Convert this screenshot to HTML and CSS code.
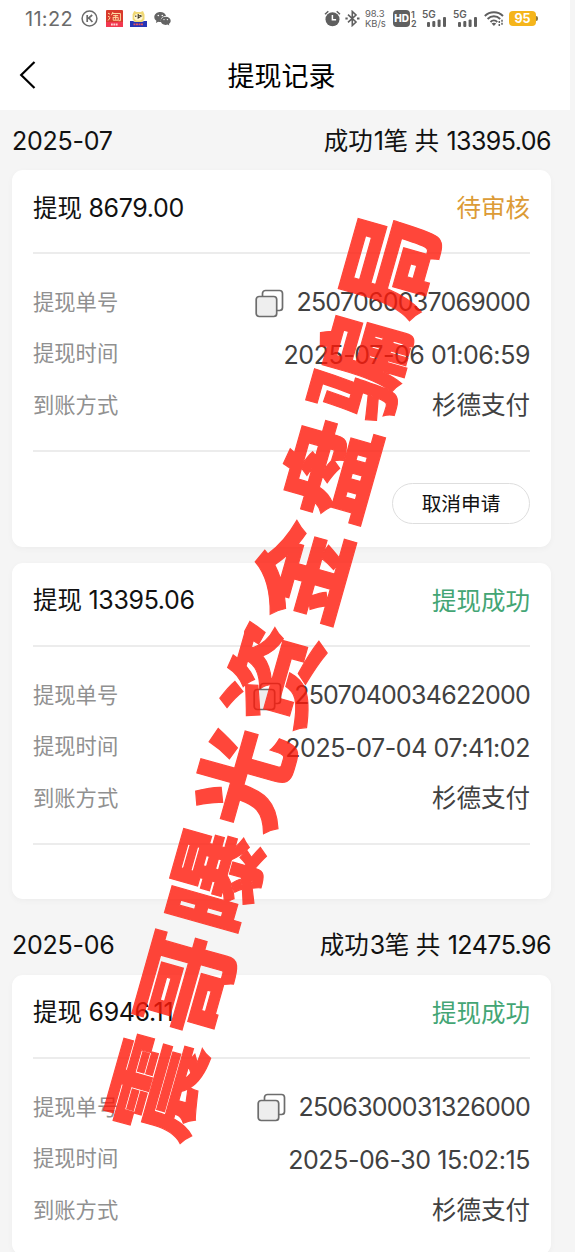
FILE: index.html
```html
<!DOCTYPE html>
<html lang="zh-CN">
<head>
<meta charset="utf-8">
<title>提现记录</title>
<link rel="stylesheet" href="styles.css">
</head>
<body>
<div class="page">
  <header class="top">
    <div class="status">
      <span class="clock">11:22</span>
      <svg class="ic-k" width="17" height="17" viewBox="0 0 17 17" fill="none" stroke="#6b6b6b"><circle cx="8.5" cy="8.5" r="7.4" stroke-width="1.5"/><path d="M6.2 5v7M11.2 5 7 8.7M8 8l3.4 4" stroke-width="1.7"/></svg>
      <svg class="ic-app" width="17" height="17" viewBox="0 0 17 17"><rect width="17" height="17" rx="1" fill="#d93a2c"/><path d="M2 3.2l2 1M2 6.3l2 1M2 10.5l2.2-2.8M7 2 5.4 5.2M6 3.5h8.4v7.2h-2M7.2 5.6h5M9.7 4.8v5M6.6 7.4h6M7.2 8v2.2h5V8" stroke="#ffd9a0" stroke-width="1" fill="none"/><rect y="12" width="17" height="5" fill="#f23850"/><path d="M5 14.5h7" stroke="#ffd3d3" stroke-width="1.8" stroke-dasharray="1.8 .6"/></svg>
      <svg class="ic-app" width="17" height="17" viewBox="0 0 17 17"><path d="M2.6 4.3 4.2 1l2.5 1h3.8L13 1l1.5 3.5v5L12 12H5L2.6 9.5z" fill="#f0d873"/><ellipse cx="8.4" cy="7.2" rx="4.2" ry="3.4" fill="#fff7d4"/><path d="M5.8 5.5v1.6M8.2 4v4l3-2-3-1.5" stroke="#3b3322" stroke-width="1.1" fill="none"/><path d="M0 11h3l2 1h7l2-1h3v6H0z" fill="#2535b6"/><path d="M3.5 14.3h10" stroke="#e05162" stroke-width="1.8" stroke-dasharray="2 .5"/></svg>
      <svg class="ic-chat" width="17" height="17" viewBox="0 0 17 17"><path d="M6.3 2C2.900 2 .3 4.200.3 7c0 1.600.8 2.900 2.100 3.800L1.900 13l2.300-1.200c.8.3 2 .3 2.900.1C6 8.500 8.400 6 12 6 11.400 3.500 9.200 2 6.300 2z" fill="#646464"/><path d="M11.700 6.700c-2.900 0-5 1.800-5 4.100s2.100 4.100 5 4.100c.6 0 1.200-.1 1.800-.3l1.800 1-.4-1.700c1.200-.8 1.800-1.900 1.800-3.100 0-2.300-2.100-4.100-5-4.100z" fill="#646464"/><g fill="#fff"><circle cx="4.300" cy="5.500" r=".8"/><circle cx="8.300" cy="5.500" r=".8"/><circle cx="10" cy="9.600" r=".7"/><circle cx="13.400" cy="9.600" r=".7"/></g></svg>
      <span class="spacer"></span>
      <svg width="17" height="17" viewBox="0 0 17 17"><circle cx="8.500" cy="9.200" r="7" fill="#5f5f5f"/><path d="M1 4.200 4.300 1.300M16 4.200l-3.300-2.900" stroke="#5f5f5f" stroke-width="1.500"/><path d="M8.400 5v4.700h3.700" fill="none" stroke="#fff" stroke-width="1.500"/></svg>
      <svg class="ic-bt" width="15" height="17" viewBox="0 0 15 17" fill="none" stroke="#5f5f5f" stroke-width="1.600"><path d="M3 4.700 11 12l-3.700 3.500v-14L11 5 3 12.300"/><path d="M.4 8.500h2.300M12 8.500h2.500" stroke-width="2"/></svg>
      <span class="speed"><span>98.3</span><span>KB/s</span></span>
      <span class="hd">HD</span>
      <span class="sims"><span>1</span><span>2</span></span>
      <span class="cell"><span class="gen">5G</span><svg width="20" height="10" viewBox="0 0 20 10" fill="#5f5f5f"><rect x="0" y="5" width="3" height="5" rx="1"/><rect x="5.300" y="4" width="3" height="6" rx="1"/><rect x="10.600" y="2.500" width="3" height="7.500" rx="1"/><rect x="16" y="0" width="3" height="10" rx="1"/></svg></span>
      <span class="cell"><span class="gen">5G</span><svg width="20" height="10" viewBox="0 0 20 10" fill="#5f5f5f"><rect x="0" y="5" width="3" height="5" rx="1"/><rect x="5.300" y="4" width="3" height="6" rx="1"/><rect x="10.600" y="2.500" width="3" height="7.500" rx="1"/><rect x="16" y="0" width="3" height="10" rx="1"/></svg></span>
      <svg class="ic-wifi" width="20" height="17" viewBox="0 0 20 17" fill="none" stroke="#5f5f5f" stroke-width="1.900"><path d="M.8 6c5-5 13.200-5 18.200 0M3.600 9c3.600-3.600 9-3.600 12.600 0M6.500 12c2-2 4.800-2 6.800 0"/><path d="m7.600 13.500 2.300 2.400 2.300-2.400c-1.300-1-3.300-1-4.600 0z" fill="#5f5f5f" stroke="none"/><path d="M15.300 11v5M18 9.800v5" stroke-width="1.500" stroke-dasharray="2 1"/></svg>
      <span class="battery">95</span>
    </div>
    <nav class="nav">
      <svg class="back" width="18" height="28" viewBox="0 0 18 28" fill="none" stroke="#000" stroke-width="2.200"><path d="M15.500 1 2.200 14l13.300 13"/></svg>
      <h1>提现记录</h1>
    </nav>
  </header>

  <main class="list">
    <div class="month"><span class="n ym">2025-07</span><span class="sum">成功<b class="n">1</b>笔 共 <b class="n">13395.06</b></span></div>
    <section class="card">
      <div class="head"><span>提现 <b class="n">8679.00</b></span><span class="pending">待审核</span></div>
      <div class="rows">
        <div class="row"><label>提现单号</label><span class="val"><svg class="copy" width="29" height="29" viewBox="0 0 29 29" fill="none" stroke="#6d6d6d" stroke-width="1.700"><rect x="7.500" y="1.500" width="20" height="20" rx="3"/><rect x="1.200" y="7.500" width="20.500" height="20" rx="3" fill="#eee"/></svg><b class="n">2507060037069000</b></span></div>
        <div class="row"><label>提现时间</label><span class="val n">2025-07-06 01:06:59</span></div>
        <div class="row"><label>到账方式</label><span class="val">杉德支付</span></div>
      </div>
      <div class="foot"><button class="cancel">取消申请</button></div>
    </section>
    <section class="card">
      <div class="head"><span>提现 <b class="n">13395.06</b></span><span class="ok">提现成功</span></div>
      <div class="rows">
        <div class="row"><label>提现单号</label><span class="val"><svg class="copy" width="29" height="29" viewBox="0 0 29 29" fill="none" stroke="#6d6d6d" stroke-width="1.700"><rect x="7.500" y="1.500" width="20" height="20" rx="3"/><rect x="1.200" y="7.500" width="20.500" height="20" rx="3" fill="#eee"/></svg><b class="n">2507040034622000</b></span></div>
        <div class="row"><label>提现时间</label><span class="val n">2025-07-04 07:41:02</span></div>
        <div class="row"><label>到账方式</label><span class="val">杉德支付</span></div>
      </div>
      <div class="foot empty"></div>
    </section>
    <div class="month"><span class="n ym">2025-06</span><span class="sum">成功<b class="n">3</b>笔 共 <b class="n">12475.96</b></span></div>
    <section class="card">
      <div class="head"><span>提现 <b class="n">6946.11</b></span><span class="ok">提现成功</span></div>
      <div class="rows">
        <div class="row"><label>提现单号</label><span class="val"><svg class="copy" width="29" height="29" viewBox="0 0 29 29" fill="none" stroke="#6d6d6d" stroke-width="1.700"><rect x="7.500" y="1.500" width="20" height="20" rx="3"/><rect x="1.200" y="7.500" width="20.500" height="20" rx="3" fill="#eee"/></svg><b class="n">2506300031326000</b></span></div>
        <div class="row"><label>提现时间</label><span class="val n">2025-06-30 15:02:15</span></div>
        <div class="row"><label>到账方式</label><span class="val">杉德支付</span></div>
      </div>
    </section>
  </main>
  <div class="watermark">震哥曝光资金盘骗局</div>
</div>
</body>
</html>
```
FILE: styles.css
```css
* { box-sizing: border-box; }
body { margin: 0; background: #f5f5f5; font-family: "Noto Sans CJK SC", sans-serif; }
.page { position: relative; width: 575px; height: 1252px; overflow: hidden; color: #111; }

.top { width: 570px; height: 110px; background: #fff; }
.status { display: flex; align-items: center; height: 37px; padding: 0 34px 0 25px; color: #5f5f5f; font-family: Inter, sans-serif; }
.status svg { flex: none; display: block; }
.clock { width: 50px; font-size: 20px; letter-spacing: .3px; color: #6b6b6b; white-space: nowrap; }
.ic-k { margin-left: 6px; }
.ic-app { margin-left: 7.500px; }
.ic-chat { margin-left: 6.500px; }
.spacer { flex: 1; }
.ic-bt { margin-left: 4px; }
.speed { display: flex; flex-direction: column; width: 22px; margin-left: 5px; font-size: 9.500px; line-height: 9.500px; letter-spacing: -.1px; white-space: nowrap; }
.hd { width: 17px; height: 17px; margin-left: 6px; border-radius: 4px; background: #5f5f5f; color: #fff; font-size: 10px; font-weight: 800; line-height: 17px; text-align: center; }
.sims { display: flex; flex-direction: column; width: 7px; margin-left: 1px; font-size: 9px; font-weight: 600; line-height: 9px; }
.cell { display: flex; flex-direction: column; width: 25px; height: 17px; margin-left: 4px; }
.cell + .cell { margin-left: 6px; }
.gen { height: 7px; font-size: 10px; font-weight: 600; line-height: 8px; }
.cell svg { margin-left: 5px; }
.ic-wifi { margin-left: 6px; }
.battery { position: relative; width: 27px; height: 15px; margin-left: 5px; border-radius: 4px; background: #f5b51b; color: #fff; font-size: 12.500px; font-weight: 700; line-height: 15px; text-align: center; }
.battery::after { content: ""; position: absolute; left: 27px; top: 5px; width: 2px; height: 5px; border-radius: 0 2px 2px 0; background: #8c7a45; }

.nav { display: grid; grid-template-columns: 44px 1fr 51px; align-items: center; height: 76px; }
.back { margin-left: 19px; }
.nav h1 { margin: 0; font-size: 27px; font-weight: 400; line-height: 40px; text-align: center; color: #000; }

.list { width: 563px; padding: 0 12px; }
.n { font-family: Inter, sans-serif; font-size: 25px; font-weight: 400; letter-spacing: -.75px; }
.month { display: flex; align-items: center; justify-content: space-between; height: 60px; font-size: 24.500px; line-height: 36px; }
.month .ym { padding-top: 1px; letter-spacing: -.25px; }
.sum { word-spacing: 1px; }
.month b { margin-left: 1px; letter-spacing: -.55px; }

.card { margin-bottom: 16px; padding: 0 21px; border-radius: 11px; background: #fff; box-shadow: 0 2px 6px rgba(0, 0, 0, .035); }
.head { display: flex; align-items: center; justify-content: space-between; height: 84px; padding-bottom: 8px; border-bottom: 2px solid #ececec; font-size: 24.500px; line-height: 36px; }
.head b { margin-left: 1px; letter-spacing: -.35px; }
.pending { color: #dc9b36; }
.ok { color: #43a574; }
.rows { padding: 22px 0 20px; }
.row { display: flex; align-items: center; justify-content: space-between; height: 51.300px; }
.row label { margin-top: -1px; color: #909090; font-size: 21.300px; line-height: 32px; }
.val { display: flex; align-items: center; color: #414141; font-size: 24.500px; line-height: 36px; white-space: pre; }
.val .n { padding-top: 1px; }
.val.n { padding-top: 4px; font-size: 25px; letter-spacing: -.42px; }
.copy { margin: 3px 12px 0 0; }
.foot { display: flex; justify-content: flex-end; height: 97px; padding-top: 31px; border-top: 2px solid #ececec; }
.foot.empty { height: 56px; }
.cancel { width: 138px; height: 41px; padding: 0; border: 1.500px solid #dedede; border-radius: 21px; background: #fff; color: #111; font: 400 19.700px/36px "Noto Sans CJK SC", sans-serif; }

.watermark { position: absolute; left: 268px; top: 674px; width: 1000px; height: 120px; margin: -60px 0 0 -500px; color: rgb(255, 25, 10); -webkit-text-stroke: 1.200px rgb(255, 25, 10); opacity: .8; font-size: 100px; font-weight: 900; line-height: 120px; letter-spacing: 6.700px; text-indent: 6.700px; text-align: center; white-space: nowrap; transform: rotate(-74.200deg) scaleY(.98); }
```
